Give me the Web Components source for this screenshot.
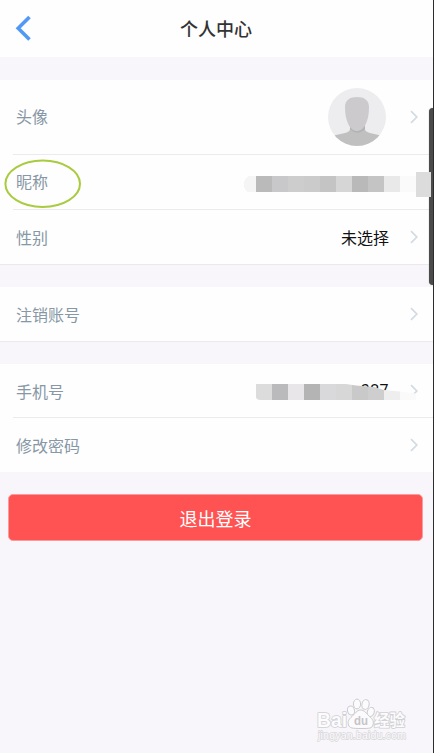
<!DOCTYPE html>
<html lang="zh-CN">
<head>
<meta charset="utf-8">
<title>个人中心</title>
<style>
html,body{margin:0;height:753px;overflow:hidden}
body{font-family:"Noto Sans CJK SC",sans-serif;background:#f8f6fa}
</style>
</head>
<body>
<profile-page></profile-page>
<script>
const define = (name, html) => {
  const t = document.createElement('template');
  t.innerHTML = html;
  customElements.define(name, class extends HTMLElement {
    constructor() {
      super();
      this.attachShadow({mode: 'open'}).append(t.content.cloneNode(true));
    }
  });
};

define('nav-header', `
<style>
:host{display:grid;grid-template-columns:48px 1fr 50px;align-items:center;height:57px;background:#fefefe;color:#333;font-size:18px;font-weight:500;line-height:26px;text-align:center;box-sizing:border-box;padding-bottom:2px}
svg{display:block;margin-left:15px}
</style>
<svg width="18" height="28" viewBox="0 0 18 28" fill="none" stroke="#5299f5" stroke-width="3.6"><path d="M14.500 3 3.200 14.300l11.300 11.300"/></svg>
<span><slot></slot></span>`);

define('cell-group', `
<style>:host{display:flex;flex-direction:column;background:#fefefe;box-sizing:border-box;border-bottom:1px solid #ebe9ed}
:host([plain]){border-bottom:0}</style><slot></slot>`);

define('cell-row', `
<style>
:host{display:flex;align-items:center;box-sizing:border-box;height:var(--h,55px);padding:0 16px var(--pb,0px);position:relative;font-size:16px;line-height:24px;color:#8797a5}
:host([line])::after{content:"";position:absolute;left:13px;right:0;bottom:0;height:1px;background:#ebebed}
.label{margin-top:-1px}
.value{margin-left:auto;margin-right:21px;color:#111;display:flex;align-items:center}
svg{display:block}
:host([bare]) svg{visibility:hidden}
</style>
<span class="label"><slot></slot></span><span class="value"><slot name="value"></slot></span>
<svg width="8" height="14" viewBox="0 0 8 14" fill="none" stroke="#d2dae2" stroke-width="1.700"><path d="M1 1.200 6.800 7 1 12.800"/></svg>`);

define('user-avatar', `
<style>:host{display:block;margin-right:3px}svg{display:block}</style>
<svg width="58" height="58" viewBox="0 0 58 58">
<defs><clipPath id="c"><circle cx="29" cy="29" r="29"/></clipPath></defs>
<g clip-path="url(#c)"><path fill="#ededef" d="M0 0h58v58H0z"/>
<path fill="#c0c0c0" d="M0 58V49.500Q8 46.800 16 45.200Q22 44 22 41V37H37V41Q37 44 43 45.200Q51 46.800 58 49.500V58z"/>
<path fill="#b4b3b4" d="M22 38h15v3q-7.500 7.500-15 0z"/>
<path fill="#cccacd" d="M17 19C17 12 22 9 29 9s12 3 12 10c0 7-1 12-3 16.500C36 40.500 32 43 29 43s-7-2.500-9-7.500C18 31 17 26 17 19z"/></g></svg>`);

define('name-mosaic', `
<style>:host{position:absolute;left:244px;top:172px}svg{display:block}</style>
<svg width="188" height="26" shape-rendering="crispEdges">
<path fill="#f5f5f5" d="M12 4H5Q0 6 0 12t4 8h8z"/>
<path fill="#bababa" d="M12 4h16v16H12z"/><path fill="#c8c8cb" d="M28 4h16v16H28z"/>
<path fill="#cdcdce" d="M44 4h16v16H44z"/><path fill="#cbcbcb" d="M60 4h16v16H60z"/>
<path fill="#c4c4c4" d="M76 4h16v16H76z"/><path fill="#d6d6d6" d="M92 4h16v16H92z"/>
<path fill="#b9b9b9" d="M108 4h16v16h-16z"/><path fill="#c4c4c4" d="M124 4h16v16h-16z"/>
<path fill="#e9e9e9" d="M140 4h16v16h-16z"/><path fill="#fafafa" d="M156 4h16v16h-16z"/>
<path fill="#dcdcdc" d="M172 0h15v25h-15z"/></svg>`);

define('phone-mosaic', `
<style>:host{position:absolute;left:256px;top:384px}svg{display:block}</style>
<svg width="178" height="17">
<defs><clipPath id="m"><path d="M0 0H90L100 1.500 118 3 128 6 144 7.500 178 12V16H5Q0 16 0 13z"/></clipPath></defs>
<g clip-path="url(#m)" shape-rendering="crispEdges">
<path fill="#dcdcdc" d="M0 0h16v16H0z"/><path fill="#bababc" d="M16 0h16v16H16z"/>
<path fill="#e8e6e9" d="M32 0h16v16H32z"/><path fill="#b4b4b4" d="M48 0h16v16H48z"/>
<path fill="#d9d9dc" d="M64 0h16v16H64z"/><path fill="#d7d7d7" d="M80 0h16v16H80z"/>
<path fill="#c9c9c9" d="M96 0h16v16H96z"/><path fill="#cecece" d="M112 0h16v16h-16z"/>
<path fill="#eee" d="M128 0h16v16h-16z"/><path fill="#fafafa" d="M144 0h16v16h-16z"/><path fill="#fefefe" d="M160 0h17v16h-17z"/></g>
</svg>`);

define('phone-tail', `
<style>:host{display:block;font:16px/22px Roboto,"Noto Sans",sans-serif;color:#111;letter-spacing:.4px}</style><slot></slot>`);

define('site-watermark', `
<style>:host{position:absolute;left:312px;top:696px}svg{display:block}
text{font-family:"Liberation Sans","Noto Sans CJK SC",sans-serif;font-weight:700;fill:#fcfbfd;stroke:#d0cfd2;stroke-width:1.700;paint-order:stroke;stroke-linejoin:round}</style>
<svg width="104" height="50" viewBox="0 0 104 50">
<text x="5" y="31" font-size="21" textLength="30" lengthAdjust="spacingAndGlyphs">Bai</text>
<g fill="#fbfafc" stroke="#cbcacd" stroke-width="1">
<ellipse cx="39" cy="14.500" rx="3.500" ry="4.600" transform="rotate(-12 39 14.500)"/><ellipse cx="45" cy="8" rx="3.600" ry="4.900"/>
<ellipse cx="53.500" cy="8.500" rx="3.600" ry="4.900" transform="rotate(12 53.500 8.500)"/><ellipse cx="58.800" cy="16" rx="3.400" ry="4.700" transform="rotate(18 58.800 16)"/>
<path d="M48.500 14C45 14 43 17.500 40 20.500c-3.500 3-4.500 5-3.500 8.500 1 3.200 4 3.500 12.500 3.500s11 0 12-3.500c1-3.500 0-5.500-3.500-8.500-3-3-5-6.500-9-6.500z"/></g>
<text x="42" y="29" font-size="13.500" textLength="14" lengthAdjust="spacingAndGlyphs" style="fill:#c6c5c8;stroke:none">du</text>
<text x="62" y="30" font-size="15.500" textLength="31">经验</text>
<text x="6" y="43" font-size="10.500" textLength="88" style="font-weight:400;stroke-width:1.400;stroke:#d8d7da">jingyan.baidu.com</text></svg>`);

define('action-button', `
<style>:host{display:block;margin:22px 11px 0 8px}
button{display:block;width:100%;height:47px;border:1px solid #f89b9d;border-radius:5px;background:#ff5353;color:#fff;font:400 18px/45px "Noto Sans CJK SC",sans-serif;padding:1px 0 0}</style>
<button><slot></slot></button>`);

define('profile-page', `
<style>
:host{display:flex;flex-direction:column;position:relative;height:753px;width:434px;background:#f8f6fa;overflow:hidden}
.stack{display:flex;flex-direction:column;padding-top:23px}
.gap{margin-top:22px}
.ring{position:absolute;left:3px;top:158px}
.edge{position:absolute;right:0;top:0;width:1px;height:753px;background:#2c2c2e}
.bar{position:absolute;left:429px;top:108px;width:8px;height:177px;border-radius:5px;background:#4b4b4b;box-shadow:0 0 1px #777}
</style>
<nav-header>个人中心</nav-header>
<div class="stack">
<cell-group>
<cell-row line style="--h:75px;--pb:2px">头像<user-avatar slot="value"></user-avatar></cell-row>
<cell-row line bare style="--pb:2px">昵称</cell-row>
<cell-row style="--h:54px">性别<span slot="value">未选择</span></cell-row>
</cell-group>
<cell-group class="gap"><cell-row style="--h:54px">注销账号</cell-row></cell-group>
<cell-group class="gap" plain>
<cell-row line style="--h:54px">手机号<phone-tail slot="value">327</phone-tail></cell-row>
<cell-row style="--h:54px">修改密码</cell-row>
</cell-group>
<action-button>退出登录</action-button>
</div>
<phone-mosaic></phone-mosaic>
<div class="bar"></div><div class="edge"></div>
<name-mosaic></name-mosaic>
<svg class="ring" width="80" height="52" fill="none" stroke="#a9cb3f" stroke-width="2"><ellipse cx="39.700" cy="25.800" rx="37.300" ry="23.200"/></svg>
<site-watermark></site-watermark>`);
</script>
</body>
</html>
